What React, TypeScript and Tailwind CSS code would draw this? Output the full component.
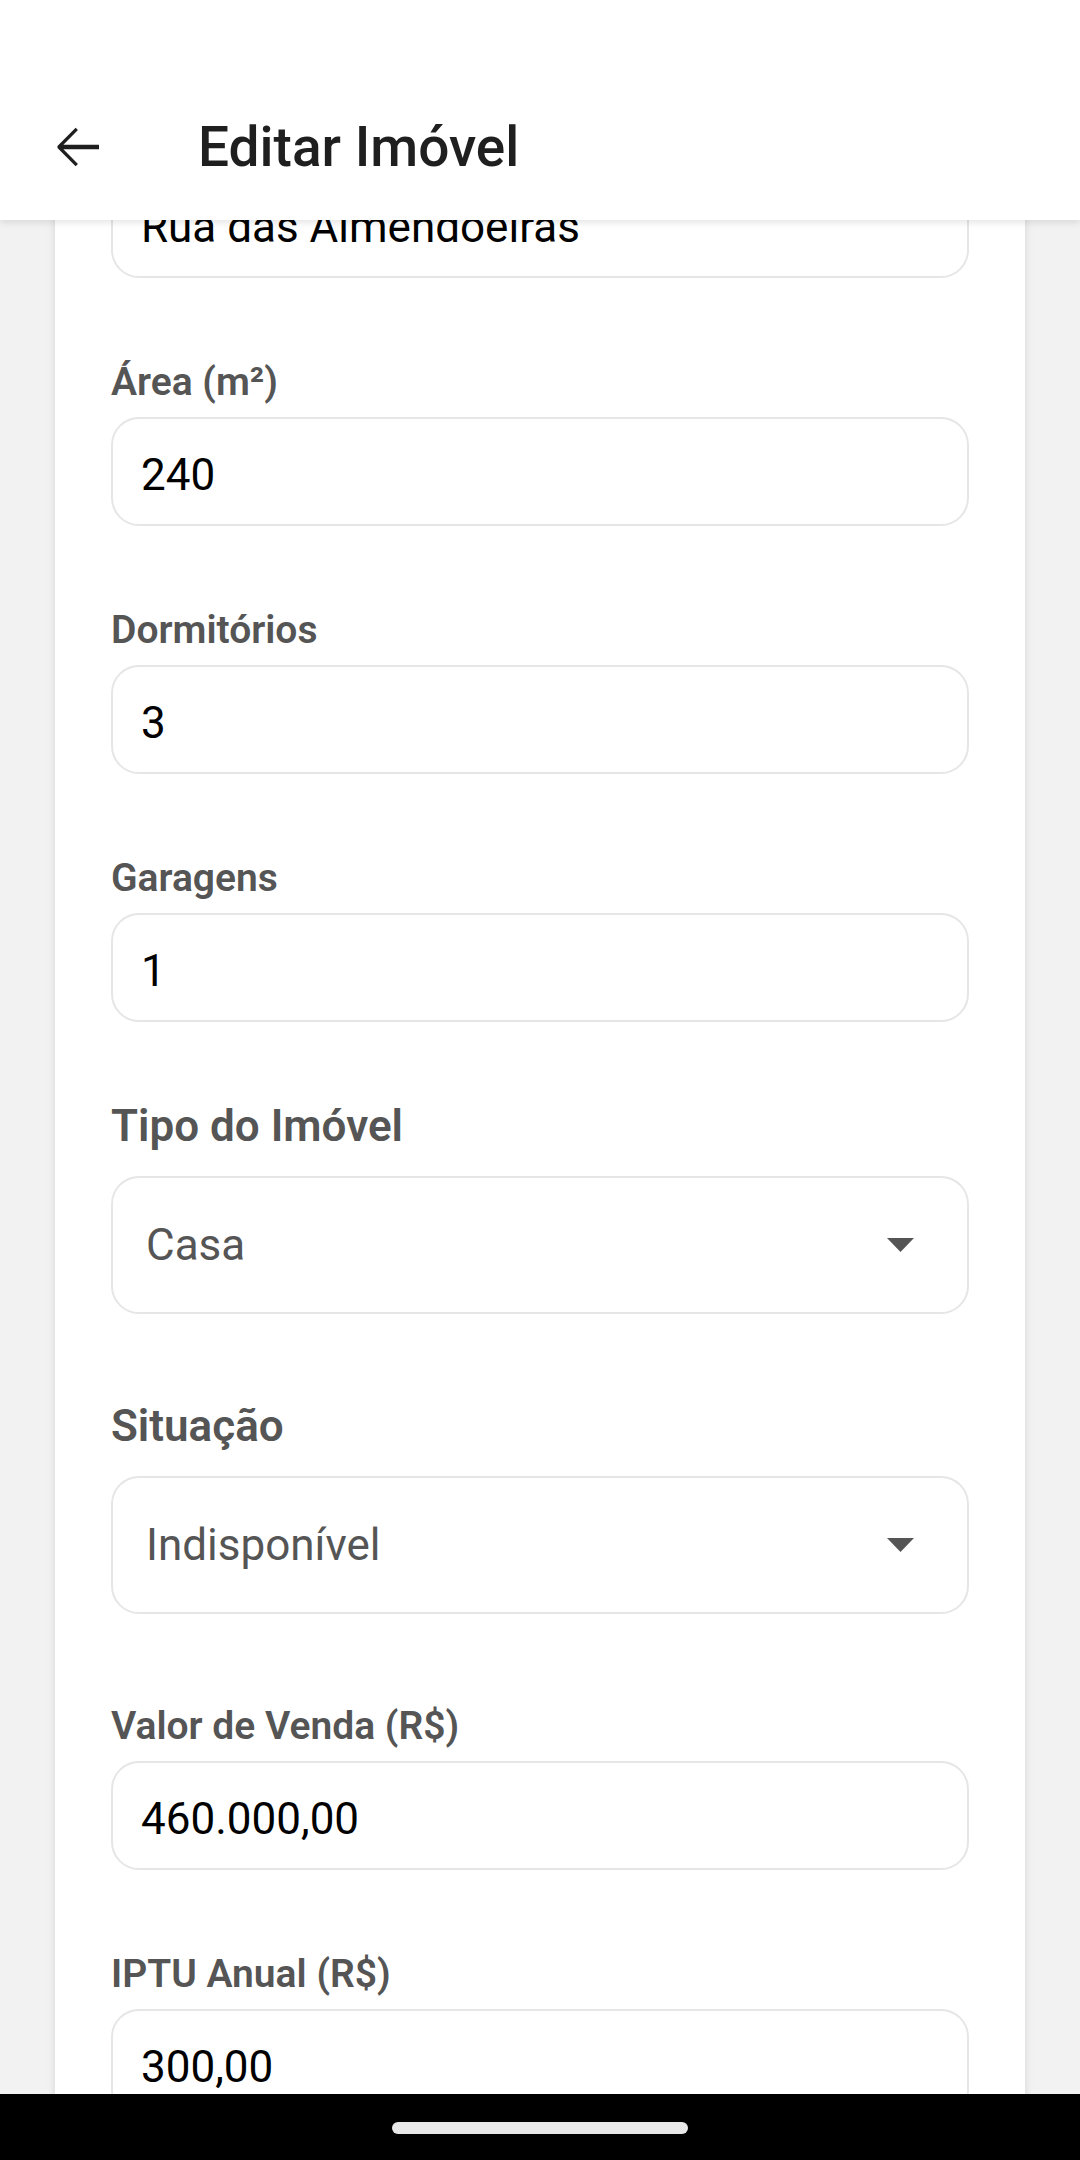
import React from "react";

const font = { fontFamily: "Roboto, 'Noto Sans', sans-serif" };

function TextField({ label, value }: { label?: string; value: string }) {
  return (
    <div className="mb-[82px]">
      {label && (
        <label className="mb-[12px] block text-[39px] font-semibold leading-[45px] text-[#555555]">
          {label}
        </label>
      )}
      <input
        readOnly
        value={value}
        className="block h-[109px] w-full rounded-[28px] border-2 border-[#e6e6e6] bg-white px-[28px] pt-[6px] text-[44px] text-black outline-none"
      />
    </div>
  );
}

function SelectField({ label, value }: { label: string; value: string }) {
  return (
    <div className="mb-[90px]">
      <label className="mb-[28px] block text-[44px] font-semibold leading-[44px] text-[#555555]">
        {label}
      </label>
      <button className="flex h-[138px] w-full items-center justify-between rounded-[28px] border-2 border-[#e6e6e6] bg-white pl-[33px] pr-[53px] text-left">
        <span className="text-[44px] text-[#555555]">{value}</span>
        <svg width="27" height="14" viewBox="0 0 27 14">
          <polygon points="0,0 27,0 13.5,14" fill="#555555" />
        </svg>
      </button>
    </div>
  );
}

export default function App() {
  return (
    <div className="flex h-[2160px] w-[1080px] flex-col overflow-hidden bg-[#f2f2f2]" style={font}>
      {/* App bar */}
      <header className="relative z-10 h-[220px] shrink-0 bg-white pt-[74px] shadow-[0_2px_8px_rgba(0,0,0,0.12)]">
        <div className="flex h-[146px] items-center">
          <button className="ml-[44px] flex h-[66px] w-[66px] items-center justify-center">
            <svg width="66" height="66" viewBox="0 0 24 24" fill="#1f1f1f">
              <path d="M20 11.15H7.05l5.3-5.3-.85-.85-6.6 6.6v.8l6.6 6.6.85-.85-5.3-5.3H20z" />
            </svg>
          </button>
          <h1 className="ml-[88px] text-[55px] font-medium text-[#1f1f1f]">Editar Imóvel</h1>
        </div>
      </header>

      {/* Scrolled form */}
      <main className="flex-1 overflow-hidden">
        <div className="mx-[55px] -mt-[51px] bg-white px-[56px] shadow-[0_0_8px_rgba(0,0,0,0.12)]">
          <TextField value="Rua das Almendoeiras" />
          <TextField label="Área (m²)" value="240" />
          <TextField label="Dormitórios" value="3" />
          <TextField label="Garagens" value="1" />
          <SelectField label="Tipo do Imóvel" value="Casa" />
          <SelectField label="Situação" value="Indisponível" />
          <TextField label="Valor de Venda (R$)" value="460.000,00" />
          <TextField label="IPTU Anual (R$)" value="300,00" />
        </div>
      </main>

      {/* Gesture nav */}
      <div className="flex h-[66px] shrink-0 justify-center bg-black pt-[28px]">
        <div className="h-[12px] w-[296px] rounded-full bg-[#e8e8e8]" />
      </div>
    </div>
  );
}
